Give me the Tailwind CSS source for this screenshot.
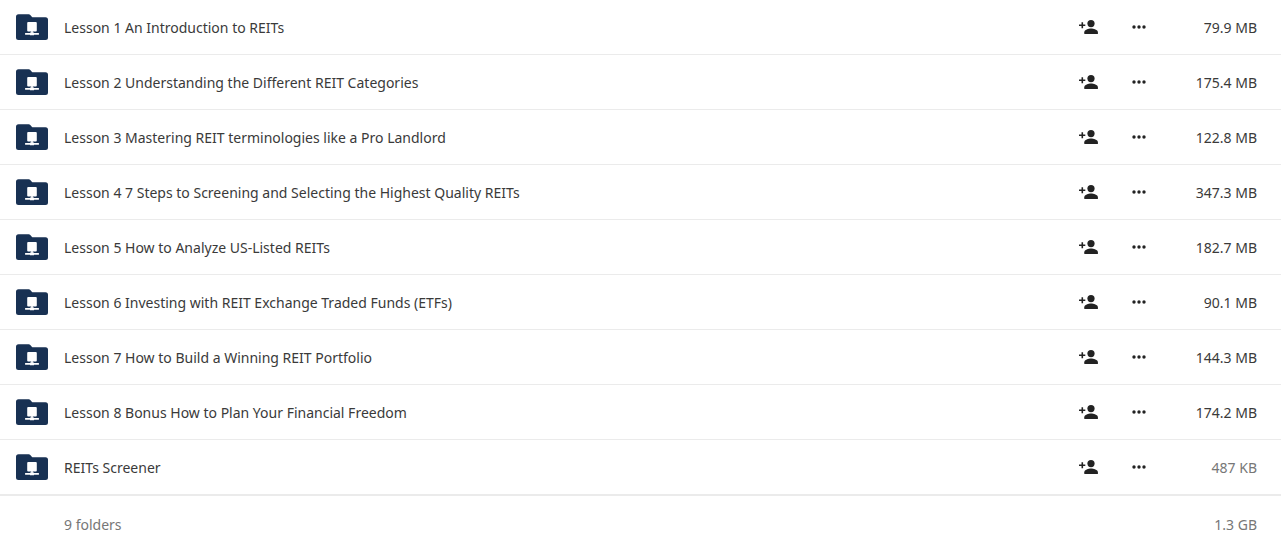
<!DOCTYPE html>
<html lang="en">
<head>
<meta charset="utf-8">
<meta name="viewport" content="width=device-width, initial-scale=1">
<title>REIT lessons</title>
<script src="https://cdn.jsdelivr.net/npm/@tailwindcss/browser@4"></script>
</head>
<body class="bg-white font-['Noto_Sans','Open_Sans',sans-serif] text-[14px] leading-[21px] text-[#3a3a3a]">
<svg class="hidden" aria-hidden="true">
  <symbol id="folder" viewBox="0 0 32 27">
    <path fill="#183153" d="M3 0.300h9.700q1 0 1.600.7l1.500 1.800q.5.500 1.300.5H29.500q2.500 0 2.500 2.500V23.500q0 2.500-2.500 2.500H2.500q-2.500 0-2.500-2.500v-20.700q0-2.500 2.500-2.500z"/>
    <rect x="11.200" y="8" width="9.600" height="9.400" rx="1" fill="#fff"/>
    <path fill="#fff" d="M15.200 17h1.600v1.500h1.200v.5h4.900v1.700h-4.900v.6h-4v-.6H9.100v-1.700h4.900v-.5h1.200z"/>
  </symbol>
  <symbol id="share" viewBox="0 0 20 16">
    <circle cx="12" cy="4.600" r="3.600"/>
    <path d="M5.300 15v-1.800c0-2.500 4.300-3.700 6.700-3.700s6.900 1.200 6.900 3.700V15z"/>
    <path d="M2.500 3.300h1.600v2.100h2.200v1.500H4.100v2.300H2.500V6.900H0V5.400h2.500z"/>
  </symbol>
  <symbol id="more" viewBox="0 0 14 4">
    <circle cx="2" cy="2" r="1.700"/><circle cx="7" cy="2" r="1.700"/><circle cx="12" cy="2" r="1.700"/>
  </symbol>
</svg>
<table class="w-full table-fixed border-separate border-spacing-0">
  <colgroup><col class="w-16"><col><col class="w-[50px]"><col class="w-[50px]"><col class="w-[117px]"></colgroup>
  <tbody id="files"></tbody>
  <tfoot>
    <tr class="h-14 text-[#777]"><td></td><td colspan="3">9 folders</td><td class="pr-6 text-right">1.3 GB</td></tr>
  </tfoot>
</table>
<script>
  const files = [
    ['Lesson 1 An Introduction to REITs', '79.9 MB'],
    ['Lesson 2 Understanding the Different REIT Categories', '175.4 MB'],
    ['Lesson 3 Mastering REIT terminologies like a Pro Landlord', '122.8 MB'],
    ['Lesson 4 7 Steps to Screening and Selecting the Highest Quality REITs', '347.3 MB'],
    ['Lesson 5 How to Analyze US-Listed REITs', '182.7 MB'],
    ['Lesson 6 Investing with REIT Exchange Traded Funds (ETFs)', '90.1 MB'],
    ['Lesson 7 How to Build a Winning REIT Portfolio', '144.3 MB'],
    ['Lesson 8 Bonus How to Plan Your Financial Freedom', '174.2 MB'],
    ['REITs Screener', '487 KB']
  ];
  document.getElementById('files').innerHTML = files.map(([name, size]) => `
    <tr class="h-[55px] *:border-b *:border-[#ebebeb] last:h-14 last:*:border-b-2">
      <td class="pl-4"><svg class="block h-[27px] w-8" aria-hidden="true"><use href="#folder"/></svg></td>
      <td class="truncate"><a href="#">${name}</a></td>
      <td><button type="button" class="flex h-10 w-[50px] items-center justify-center" aria-label="Share ${name}"><svg class="h-4 w-5 fill-[#222]"><use href="#share"/></svg></button></td>
      <td><button type="button" class="flex h-10 w-[50px] items-center justify-center" aria-label="More actions for ${name}"><svg class="h-1 w-3.5 fill-[#222]"><use href="#more"/></svg></button></td>
      <td class="pr-6 text-right ${size.endsWith('KB') ? 'text-[#777]' : ''}">${size}</td>
    </tr>`).join('');
</script>
</body>
</html>
